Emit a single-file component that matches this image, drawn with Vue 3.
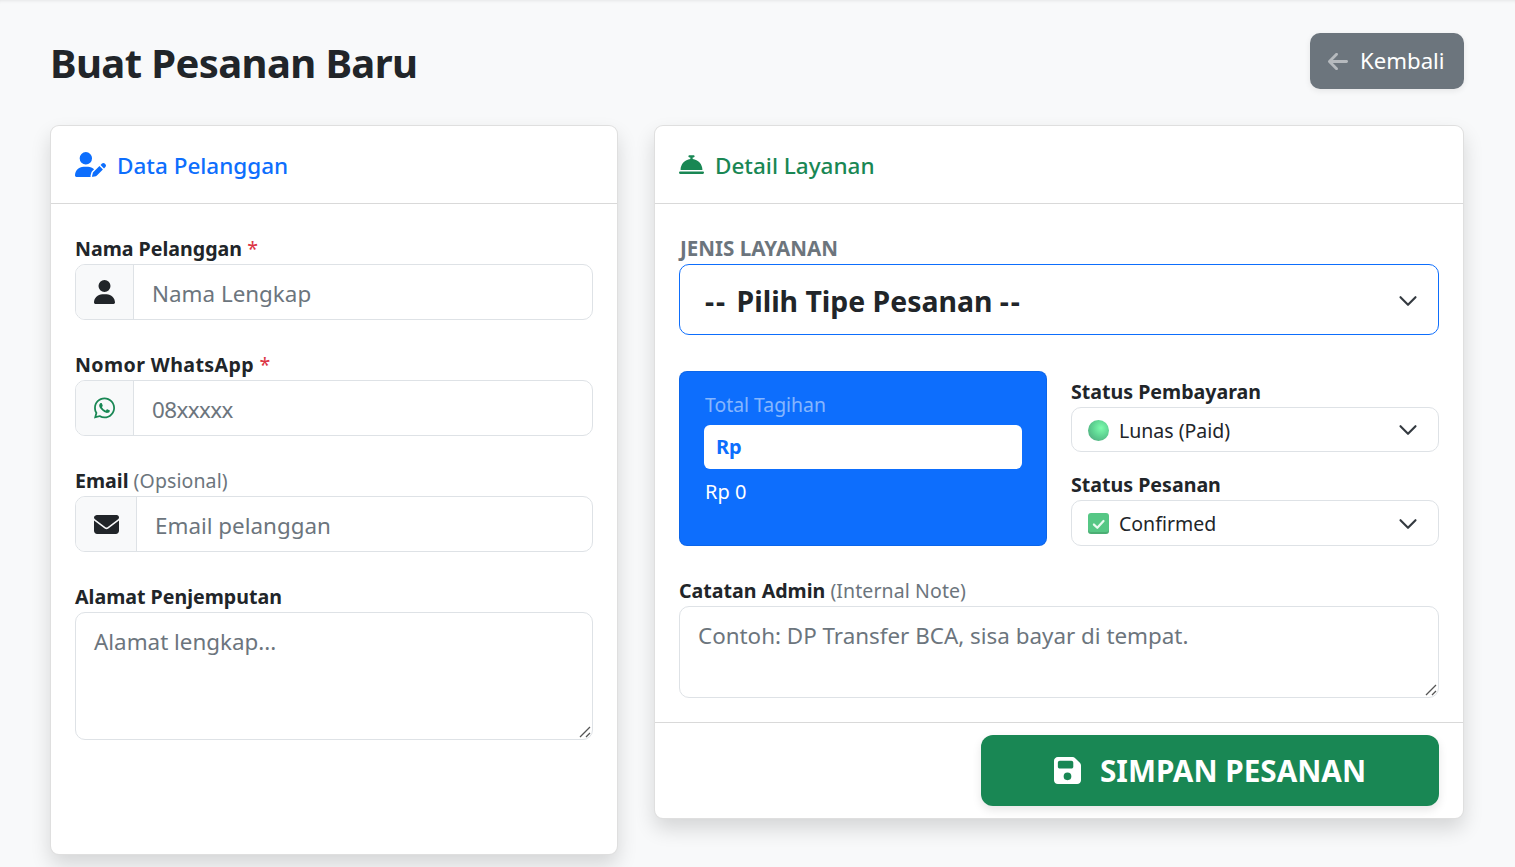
<script setup>
</script>

<template>
  <div class="page">
    <header class="top">
      <h1>Buat Pesanan Baru</h1>
      <button class="back">
        <svg class="arrow" viewBox="0 0 448 512" width="20" height="23" fill="currentColor"><path d="M9.4 233.4c-12.5 12.5-12.5 32.8 0 45.3l160 160c12.5 12.5 32.8 12.5 45.3 0s12.5-32.8 0-45.3L109.2 288 416 288c17.7 0 32-14.3 32-32s-14.3-32-32-32l-306.7 0L214.6 118.6c12.5-12.5 12.5-32.8 0-45.3s-32.8-12.5-45.3 0l-160 160z"/></svg>
        <span>Kembali</span>
      </button>
    </header>

    <div class="cols">
      <section class="card left">
        <div class="card-head blue">
          <svg viewBox="0 0 640 512" width="31" height="25" fill="currentColor"><path d="M224 256A128 128 0 1 0 224 0a128 128 0 1 0 0 256zm-45.7 48C79.8 304 0 383.8 0 482.3C0 498.7 13.3 512 29.7 512H322.8c-3.1-8.8-3.7-18.4-1.4-27.8l15-60.1c2.8-11.3 8.6-21.5 16.8-29.7l40.3-40.3c-32.1-31-75.7-50.1-123.9-50.1H178.3zm435.5-68.3c-15.6-15.6-40.9-15.6-56.6 0l-29.4 29.4 71 71 29.4-29.4c15.6-15.6 15.6-40.9 0-56.6l-14.4-14.4zM375.9 417c-4.1 4.1-7 9.2-8.4 14.9l-15 60.1c-1.4 5.5 .2 11.2 4.2 15.2s9.7 5.6 15.2 4.2l60.1-15c5.6-1.4 10.8-4.3 14.9-8.4L576.1 358.7l-71-71L375.9 417z"/></svg>
          <span>Data Pelanggan</span>
        </div>
        <div class="body">
          <div class="field">
            <label>Nama Pelanggan <em>*</em></label>
            <div class="group">
              <div class="addon">
                <svg viewBox="0 0 448 512" width="21" height="24" fill="#212529"><path d="M224 256A128 128 0 1 0 224 0a128 128 0 1 0 0 256zm-45.7 48C79.8 304 0 383.8 0 482.3C0 498.7 13.3 512 29.7 512H418.3c16.4 0 29.7-13.3 29.7-29.7C448 383.8 368.2 304 269.7 304H178.3z"/></svg>
              </div>
              <div class="input">Nama Lengkap</div>
            </div>
          </div>
          <div class="field">
            <label class="wa">Nomor WhatsApp <em>*</em></label>
            <div class="group">
              <div class="addon">
                <svg viewBox="0 0 448 512" width="21" height="24" fill="#198754"><path d="M380.9 97.1C339 55.1 283.2 32 223.9 32c-122.4 0-222 99.6-222 222 0 39.1 10.2 77.3 29.6 111L0 480l117.7-30.9c32.4 17.7 68.9 27 106.1 27h.1c122.3 0 224.1-99.6 224.1-222 0-59.3-25.2-115-67.1-157zm-157 341.6c-33.2 0-65.7-8.9-94-25.7l-6.7-4-69.8 18.3L72 359.2l-4.4-7c-18.5-29.4-28.2-63.3-28.2-98.2 0-101.7 82.8-184.5 184.6-184.5 49.3 0 95.6 19.2 130.4 54.1 34.8 34.9 56.2 81.2 56.1 130.5 0 101.8-84.9 184.6-186.6 184.6zm101.2-138.2c-5.5-2.8-32.8-16.2-37.9-18-5.1-1.9-8.8-2.8-12.5 2.8-3.7 5.6-14.3 18-17.6 21.8-3.2 3.7-6.5 4.2-12 1.4-32.6-16.3-54-29.1-75.5-66-5.7-9.8 5.7-9.1 16.3-30.3 1.8-3.7.9-6.9-.5-9.7-1.4-2.8-12.5-30.1-17.1-41.2-4.5-10.8-9.1-9.3-12.5-9.5-3.2-.2-6.9-.2-10.6-.2-3.7 0-9.7 1.4-14.8 6.9-5.1 5.6-19.4 19-19.4 46.3 0 27.3 19.9 53.7 22.6 57.4 2.8 3.7 39.1 59.7 94.8 83.8 35.2 15.2 49 16.5 66.6 13.9 10.7-1.6 32.8-13.4 37.4-26.4 4.6-13 4.6-24.1 3.2-26.4-1.3-2.5-5-3.9-10.5-6.6z"/></svg>
              </div>
              <div class="input phone">08xxxxx</div>
            </div>
          </div>
          <div class="field">
            <label>Email <small>(Opsional)</small></label>
            <div class="group">
              <div class="addon wide">
                <svg viewBox="0 0 512 512" width="25" height="25" fill="#212529"><path d="M48 64C21.5 64 0 85.5 0 112c0 15.1 7.1 29.3 19.2 38.4L236.8 313.6c11.4 8.5 27 8.5 38.4 0L492.8 150.4c12.1-9.1 19.2-23.3 19.2-38.4c0-26.5-21.5-48-48-48H48zM0 176V384c0 35.3 28.7 64 64 64H448c35.3 0 64-28.7 64-64V176L294.4 339.2c-22.8 17.1-54 17.1-76.8 0L0 176z"/></svg>
              </div>
              <div class="input">Email pelanggan</div>
            </div>
          </div>
          <div class="field last">
            <label>Alamat Penjemputan</label>
            <div class="area-wrap">
              <textarea class="area tall" placeholder="Alamat lengkap..."></textarea>
              <svg class="grip" viewBox="0 0 14 14" width="14" height="14"><path d="M13 3 3 13M13 9l-4 4" stroke="#555" stroke-width="1.3" fill="none"/></svg>
            </div>
          </div>
        </div>
      </section>

      <section class="card right">
        <div class="card-head green">
          <svg viewBox="0 0 512 512" width="25" height="25" fill="currentColor"><path d="M216 64c-13.3 0-24 10.7-24 24s10.7 24 24 24h16v33.3C119.6 157.2 32 252.4 32 368H480c0-115.6-87.6-210.8-200-222.7V112h16c13.3 0 24-10.7 24-24s-10.7-24-24-24H256 216zM24 400c-13.3 0-24 10.7-24 24s10.7 24 24 24H488c13.3 0 24-10.7 24-24s-10.7-24-24-24H24z"/></svg>
          <span>Detail Layanan</span>
        </div>
        <div class="body">
          <label class="upper">JENIS LAYANAN</label>
          <div class="select big">
            <span><span class="dash">--</span> Pilih Tipe Pesanan <span class="dash">--</span></span>
            <svg viewBox="0 0 16 16" width="20" height="20"><path fill="none" stroke="#343a40" stroke-linecap="round" stroke-linejoin="round" stroke-width="1.7" d="m2 5 6 6 6-6"/></svg>
          </div>
          <div class="split">
            <div class="bill">
              <div class="bill-label">Total Tagihan</div>
              <div class="rp">Rp</div>
              <div class="bill-val">Rp 0</div>
            </div>
            <div class="statuses">
              <div class="sfield">
                <label>Status Pembayaran</label>
                <div class="select small">
                  <span class="opt"><i class="ball"></i>Lunas (Paid)</span>
                  <svg viewBox="0 0 16 16" width="20" height="20"><path fill="none" stroke="#343a40" stroke-linecap="round" stroke-linejoin="round" stroke-width="1.7" d="m2 5 6 6 6-6"/></svg>
                </div>
              </div>
              <div class="sfield">
                <label>Status Pesanan</label>
                <div class="select small">
                  <span class="opt"><i class="check"><svg viewBox="0 0 16 16" width="18" height="18"><path fill="none" stroke="#e9fbf0" stroke-width="2" stroke-linecap="round" stroke-linejoin="round" d="m3.5 8.5 3 2.8 5.5-6"/></svg></i>Confirmed</span>
                  <svg viewBox="0 0 16 16" width="20" height="20"><path fill="none" stroke="#343a40" stroke-linecap="round" stroke-linejoin="round" stroke-width="1.7" d="m2 5 6 6 6-6"/></svg>
                </div>
              </div>
            </div>
          </div>
          <label class="note">Catatan Admin <small>(Internal Note)</small></label>
          <div class="area-wrap">
            <textarea class="area short" placeholder="Contoh: DP Transfer BCA, sisa bayar di tempat."></textarea>
            <svg class="grip" viewBox="0 0 14 14" width="14" height="14"><path d="M13 3 3 13M13 9l-4 4" stroke="#555" stroke-width="1.3" fill="none"/></svg>
          </div>
        </div>
        <div class="foot">
          <button class="save">
            <svg viewBox="0 0 448 512" width="27" height="31" fill="#fff"><path d="M64 32C28.7 32 0 60.7 0 96V416c0 35.3 28.7 64 64 64H384c35.3 0 64-28.7 64-64V173.3c0-17-6.7-33.3-18.7-45.3L352 50.7C340 38.7 323.7 32 306.7 32H64zm0 96c0-17.7 14.3-32 32-32H288c17.7 0 32 14.3 32 32v64c0 17.7-14.3 32-32 32H96c-17.7 0-32-14.3-32-32V128zM224 288a64 64 0 1 1 0 128 64 64 0 1 1 0-128z"/></svg>
            <span>SIMPAN PESANAN</span>
          </button>
        </div>
      </section>
    </div>
  </div>
</template>

<style scoped>
.page {
  box-sizing: border-box;
  height: 867px;
  overflow: hidden;
  padding: 33px 51px 0 50px;
  background: #f8f9fa;
  color: #212529;
  font-family: "Noto Sans", sans-serif;
  font-size: 20px;
  box-shadow: inset 0 4px 4px -4px rgba(0,0,0,.12);
}
.top { display: flex; justify-content: space-between; align-items: flex-start; height: 92px; }
h1 { margin: 0; font-size: 40px; font-weight: 700; line-height: 60px; letter-spacing: -.62px; }
.back {
  display: flex; align-items: center; gap: 12px;
  width: 154px; height: 56px; padding: 0 18px;
  box-sizing: border-box;
  background: #6c757d; color: #fff; border: 0; border-radius: 10px;
  font: 400 22.2px/30px "Noto Sans", sans-serif;
  box-shadow: 0 2px 6px rgba(0,0,0,.08);
}
.arrow { opacity: .5; }
.cols { display: grid; grid-template-columns: 568px 810px; gap: 36px; align-items: start; }
.card {
  box-sizing: border-box;
  background: #fff;
  border: 1px solid rgba(0,0,0,.125);
  border-radius: 9px;
  box-shadow: 0 10px 20px rgba(0,0,0,.14);
}
.left { height: 730px; }
.right { height: 694px; }
.card-head {
  box-sizing: border-box;
  height: 78px;
  padding: 0 24px;
  display: flex; align-items: center; gap: 11px;
  border-bottom: 1px solid rgba(0,0,0,.15);
  font-size: 22.5px; font-weight: 500;
}
.card-head span { padding-top: 1px; }
.blue { color: #0d6efd; }
.green { color: #198754; }
.body { padding: 32px 24px 0; }
.field { margin-bottom: 32px; }
label { display: block; font-weight: 700; font-size: 19.6px; line-height: 26px; padding-bottom: 2px; margin: 0; }
label.wa { letter-spacing: .4px; }
label em { color: #dc3545; font-style: normal; font-weight: 400; }
label small { font-size: 19.5px; font-weight: 400; color: #6c757d; letter-spacing: .1px; }
.group {
  display: flex; height: 56px; box-sizing: border-box;
  border: 1px solid #dee2e6; border-radius: 10px; overflow: hidden;
}
.addon {
  box-sizing: border-box; width: 58px; flex: none;
  display: flex; align-items: center; justify-content: center;
  background: #f8f9fa; border-right: 1px solid #dee2e6;
}
.addon.wide { width: 61px; }
.input { padding-left: 18px; padding-top: 3px; display: flex; align-items: center; font-size: 22.4px; color: #6c757d; }
.input.phone { letter-spacing: -.6px; }
.area-wrap { position: relative; }
.grip { position: absolute; right: 2px; bottom: 2px; pointer-events: none; }
.area {
  display: block; width: 100%; box-sizing: border-box;
  border: 1px solid #dee2e6; border-radius: 10px;
  font: 400 22.4px/34px "Noto Sans", sans-serif;
  outline: none; color: #212529; background: #fff;
  resize: none;
}
.area::placeholder { color: #6c757d; opacity: 1; }
.tall { height: 128px; padding: 12px 18px; }
.short { height: 92px; padding: 12px 18px; }
.upper { color: #6c757d; font-size: 20.6px; line-height: 24px; padding: 0 0 4px 1px; }
.select {
  box-sizing: border-box; display: flex; align-items: center; justify-content: space-between;
  border-radius: 10px; background: #fff;
}
.select.big {
  height: 71px; padding: 2px 20px 0 25px;
  border: 1px solid #0d6efd;
  font-size: 28.4px; font-weight: 700;
}
.dash { letter-spacing: 2px; margin-right: 2px; }
.split { display: grid; grid-template-columns: 368px 368px; gap: 24px; margin-top: 36px; }
.bill {
  box-sizing: border-box; height: 175px; padding: 18px 24px;
  background: #0d6efd; border-radius: 8px; border: 1px solid rgba(0,0,0,.08);
  color: #fff;
}
.bill-label { font-size: 19.4px; line-height: 30px; color: rgba(255,255,255,.5); padding-left: 1px; }
.rp {
  box-sizing: border-box; height: 44px; margin-top: 5px; padding: 0 12px;
  background: #fff; border-radius: 6px; color: #0d6efd;
  font-size: 20px; font-weight: 700; line-height: 44px;
}
.bill-val { margin-top: 8px; padding-left: 1px; font-size: 20px; line-height: 30px; }
.statuses { padding-top: 8px; display: flex; flex-direction: column; gap: 20px; }
.select.small {
  height: 45px; padding: 1px 20px 0 16px;
  border: 1px solid #dee2e6; font-size: 19.5px;
}
.sfield + .sfield .select.small { height: 46px; }
.opt { display: flex; align-items: center; gap: 10px; }
.ball {
  width: 21px; height: 21px; border-radius: 50%;
  background: radial-gradient(circle at 62% 38%, #7dfcae 0, #5fd493 45%, #4a9d78 100%);
}
.check {
  width: 21px; height: 21px; border-radius: 3px; background: #56c785;
  display: flex; align-items: center; justify-content: center;
  box-shadow: inset 0 -2px 0 rgba(0,0,0,.12);
}
.note { margin-top: 32px; }
.foot {
  margin-top: 24px; border-top: 1px solid rgba(0,0,0,.15);
  padding: 12px 24px 0;
  display: flex; justify-content: flex-end;
}
.save {
  width: 458px; height: 71px;
  display: flex; align-items: center; justify-content: center; gap: 19px;
  background: #198754; color: #fff; border: 0; border-radius: 12px;
  font: 700 29.7px/42px "Noto Sans", sans-serif;
  box-shadow: 0 4px 10px rgba(0,0,0,.1);
}
</style>

<style>
body { margin: 0; }
</style>
